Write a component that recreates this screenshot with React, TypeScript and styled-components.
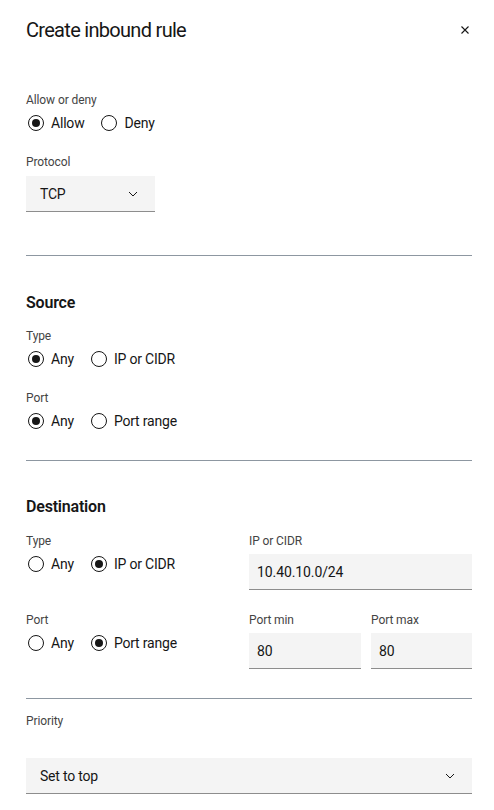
import React from "react";
import styled, { createGlobalStyle } from "styled-components";

const GlobalStyle = createGlobalStyle`
  html, body {
    margin: 0;
    padding: 0;
    background: #ffffff;
  }
  body {
    font-family: Roboto, "Noto Sans", "Liberation Sans", sans-serif;
    color: #161616;
  }
`;

type RadioOption = { label: string; checked: boolean };

const RadioGroup = (props: { options: RadioOption[] }) => {
  return (
    <RadioRow>
      {props.options.map((item) => (
        <RadioItem key={item.label}>
          <RadioCircle checked={item.checked} />
          <RadioLabel>{item.label}</RadioLabel>
        </RadioItem>
      ))}
    </RadioRow>
  );
};

const Chevron = () => (
  <svg width="10" height="6" viewBox="0 0 10 6" fill="none">
    <path d="M1 1L5 5L9 1" stroke="#161616" strokeWidth="1" />
  </svg>
);

const App = () => {
  return (
    <>
      <GlobalStyle />
      <Panel>
        <Header>
          <Title>Create inbound rule</Title>
          <CloseButton aria-label="Close">
            <svg width="10" height="10" viewBox="0 0 10 10">
              <path d="M1.5 1.5L8.5 8.5M8.5 1.5L1.5 8.5" stroke="#161616" strokeWidth="1.1" />
            </svg>
          </CloseButton>
        </Header>

        <Field top={48}>
          <Label>Allow or deny</Label>
          <RadioGroup options={[{ label: "Allow", checked: true }, { label: "Deny", checked: false }]} />
        </Field>

        <Field top={20}>
          <Label>Protocol</Label>
          <Select width={129} gap={6}>
            <span>TCP</span>
            <Chevron />
          </Select>
        </Field>

        <Divider top={43} />

        <SectionTitle top={36}>Source</SectionTitle>
        <Field top={14}>
          <Label>Type</Label>
          <RadioGroup options={[{ label: "Any", checked: true }, { label: "IP or CIDR", checked: false }]} />
        </Field>
        <Field top={20}>
          <Label>Port</Label>
          <RadioGroup options={[{ label: "Any", checked: true }, { label: "Port range", checked: false }]} />
        </Field>

        <Divider top={28} />

        <SectionTitle top={35}>Destination</SectionTitle>
        <TwoColumn top={15}>
          <div>
            <Label>Type</Label>
            <RadioGroup options={[{ label: "Any", checked: false }, { label: "IP or CIDR", checked: true }]} />
          </div>
          <div>
            <Label>IP or CIDR</Label>
            <TextInput>10.40.10.0/24</TextInput>
          </div>
        </TwoColumn>
        <TwoColumn top={22}>
          <div>
            <Label>Port</Label>
            <RadioGroup options={[{ label: "Any", checked: false }, { label: "Port range", checked: true }]} />
          </div>
          <PortGrid>
            <div>
              <Label>Port min</Label>
              <TextInput>80</TextInput>
            </div>
            <div>
              <Label>Port max</Label>
              <TextInput>80</TextInput>
            </div>
          </PortGrid>
        </TwoColumn>

        <Divider top={29} />

        <Field top={14}>
          <Label>Priority</Label>
          <Select gap={29}>
            <span>Set to top</span>
            <Chevron />
          </Select>
        </Field>
      </Panel>
    </>
  );
};

const Panel = styled.div`
  width: 446px;
  padding: 16px 22px 16px 26px;
  display: flex;
  flex-direction: column;
`;

const Header = styled.div`
  display: flex;
  align-items: center;
  justify-content: space-between;
  height: 28px;
`;

const Title = styled.h1`
  margin: 0;
  font-size: 20px;
  font-weight: 400;
  line-height: 28px;
  letter-spacing: -0.7px;
  color: #161616;
`;

const CloseButton = styled.button`
  display: flex;
  align-items: center;
  justify-content: center;
  width: 16px;
  height: 16px;
  margin-right: -1px;
  padding: 0;
  border: none;
  background: transparent;
`;

const Field = styled.div<{ top: number }>`
  display: flex;
  flex-direction: column;
  margin-top: ${(p) => p.top}px;
`;

const Label = styled.div`
  font-size: 12px;
  line-height: 16px;
  color: #444444;
  letter-spacing: -0.1px;
`;

const SectionTitle = styled.h2<{ top: number }>`
  margin: ${(p) => p.top}px 0 0 0;
  font-size: 16px;
  font-weight: 600;
  line-height: 22px;
  letter-spacing: -0.2px;
  color: #161616;
`;

const Divider = styled.hr<{ top: number }>`
  margin: ${(p) => p.top}px 0 0 0;
  border: none;
  height: 1px;
  background: #8d97a1;
`;

const RadioRow = styled.div`
  display: flex;
  align-items: center;
  gap: 15px;
  height: 22px;
  margin-top: 4px;
`;

const RadioItem = styled.label`
  display: flex;
  align-items: center;
  gap: 7px;
  padding-left: 2px;
`;

const RadioCircle = styled.span<{ checked: boolean }>`
  position: relative;
  box-sizing: border-box;
  width: 16px;
  height: 16px;
  border: 1px solid #161616;
  border-radius: 50%;

  &::before {
    content: "";
    display: ${(p) => (p.checked ? "block" : "none")};
    position: absolute;
    top: 3px;
    left: 3px;
    width: 8px;
    height: 8px;
    border-radius: 50%;
    background: #161616;
  }
`;

const RadioLabel = styled.span`
  font-size: 14px;
  line-height: 18px;
  color: #161616;
  letter-spacing: -0.2px;
`;

const Select = styled.div<{ width?: number; gap?: number }>`
  box-sizing: border-box;
  display: flex;
  align-items: center;
  justify-content: space-between;
  width: ${(p) => (p.width ? `${p.width}px` : "100%")};
  height: 36px;
  margin-top: ${(p) => p.gap ?? 6}px;
  padding: 0 17px 0 14px;
  background: #f4f4f4;
  border-bottom: 1px solid #8d8d8d;
  font-size: 14px;
  letter-spacing: -0.2px;
  color: #161616;
`;

const TwoColumn = styled.div<{ top: number }>`
  display: grid;
  grid-template-columns: 223px 1fr;
  margin-top: ${(p) => p.top}px;
`;

const PortGrid = styled.div`
  display: grid;
  grid-template-columns: 112px 1fr;
  gap: 10px;
`;

const TextInput = styled.div`
  box-sizing: border-box;
  display: flex;
  align-items: center;
  height: 36px;
  margin-top: 5px;
  padding: 0 8px;
  background: #f4f4f4;
  border-bottom: 1px solid #8d8d8d;
  font-size: 14px;
  color: #161616;
  letter-spacing: -0.1px;
`;

export default App;
